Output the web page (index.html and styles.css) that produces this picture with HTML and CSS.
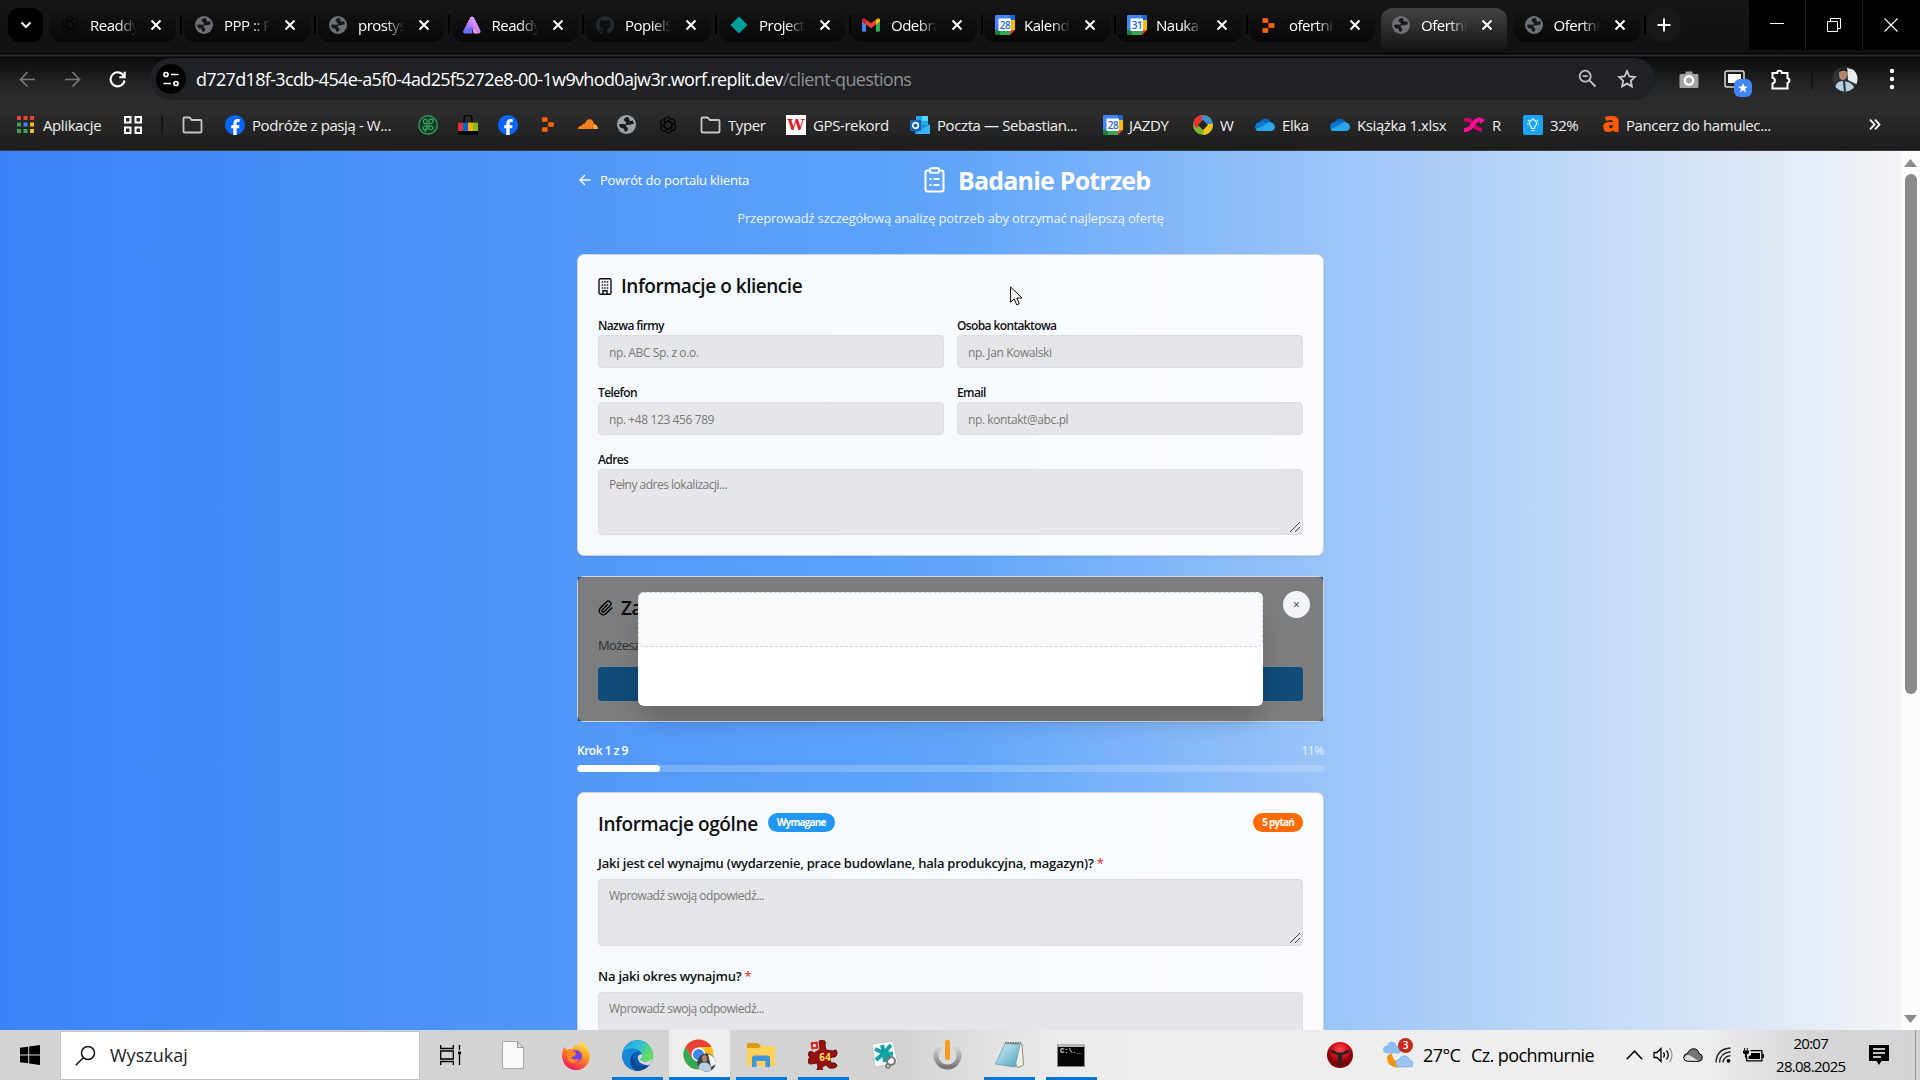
FILE: index.html
```html
<!DOCTYPE html>
<html lang="pl">
<head>
<meta charset="utf-8">
<title>Badanie Potrzeb</title>
<link rel="stylesheet" href="styles.css">
</head>
<body>
<svg class="defs" width="0" height="0" aria-hidden="true">
  <defs>
    <linearGradient id="g-a" x1="0" y1="1" x2="1" y2="0"><stop offset="0" stop-color="#5b6cff"/><stop offset=".5" stop-color="#c583ff"/><stop offset="1" stop-color="#ffb3e6"/></linearGradient>
    <linearGradient id="g-ff" x1=".8" y1="0" x2=".3" y2="1"><stop offset="0" stop-color="#fff44f"/><stop offset=".45" stop-color="#ff9020"/><stop offset="1" stop-color="#f0125f"/></linearGradient>
    <linearGradient id="g-edge" x1="0" y1="0" x2="1" y2=".4"><stop offset="0" stop-color="#1b9de2"/><stop offset=".6" stop-color="#35c1d6"/><stop offset="1" stop-color="#62e05a"/></linearGradient>
    <linearGradient id="g-pw" x1="0" y1="0" x2="0" y2="1"><stop offset="0" stop-color="#ddd"/><stop offset="1" stop-color="#777"/></linearGradient>
    <linearGradient id="g-note" x1="0" y1="0" x2="1" y2="1"><stop offset="0" stop-color="#d8f1f7"/><stop offset="1" stop-color="#4aa5bd"/></linearGradient>
    <radialGradient id="g-red" cx=".5" cy=".3"><stop offset="0" stop-color="#ff4a4a"/><stop offset=".6" stop-color="#d80f1c"/><stop offset="1" stop-color="#7d0009"/></radialGradient>
  </defs>
  <symbol id="x" viewBox="0 0 12 12"><path d="M1.500 1.500l9 9M10.500 1.500l-9 9" stroke="#fff" stroke-width="2" fill="none"/></symbol>
  <symbol id="globe" viewBox="0 0 20 20"><circle cx="10" cy="10" r="10" fill="currentColor"/><path d="M11.500 2.200C9 2.500 7.300 3.500 7.300 5c0 2 2.500 1.500 2.500 3.500S6 9.500 4 9.500l-1.700.5c0 3 2.200 4 3.700 4 2 0 1.500 3.600 3 3.600 1.600 0 2.500-1.600 2.500-3s-2-1.600-2-2.900c0-1.200 1.500-1.700 3.500-1.500s3.200-.8 4.600-.6c0-1.600-.5-3-1.400-4.200-.7 1.100-2.200 1.300-2.900.5C12.300 5 13.500 3.500 11.500 2.200z" fill="#191919"/></symbol>
  <symbol id="gpt" viewBox="0 0 20 20"><g fill="none" stroke="currentColor" stroke-width="1.500"><path id="petal" d="M10 5.500l4 2.200v5M6.200 7.700V4.600A3.600 3.600 0 0 1 13 3.100"/><use href="#petal" transform="rotate(60 10 10)"/><use href="#petal" transform="rotate(120 10 10)"/><use href="#petal" transform="rotate(180 10 10)"/><use href="#petal" transform="rotate(240 10 10)"/><use href="#petal" transform="rotate(300 10 10)"/></g></symbol>
  <symbol id="github" viewBox="0 0 16 16"><path fill="currentColor" d="M8 0C3.580 0 0 3.580 0 8c0 3.540 2.290 6.530 5.470 7.590.4.070.55-.17.55-.38 0-.19-.01-.82-.01-1.490-2.010.37-2.530-.49-2.690-.94-.09-.23-.48-.94-.82-1.130-.28-.15-.68-.52-.01-.53.63-.01 1.080.58 1.230.82.72 1.210 1.870.87 2.330.66.07-.52.28-.87.51-1.070-1.780-.2-3.640-.89-3.640-3.950 0-.87.31-1.590.82-2.150-.08-.2-.36-1.020.08-2.120 0 0 .67-.21 2.200.82a7.600 7.600 0 0 1 4 0c1.530-1.040 2.200-.82 2.200-.82.44 1.100.16 1.920.08 2.120.51.56.82 1.270.82 2.150 0 3.070-1.870 3.750-3.650 3.950.29.25.54.73.54 1.480 0 1.070-.01 1.930-.01 2.200 0 .21.15.46.55.38A8 8 0 0 0 16 8c0-4.420-3.580-8-8-8z"/></symbol>
  <symbol id="cal" viewBox="0 0 20 20"><path d="M1 0h14v5H5v10H0V1q0-1 1-1z" fill="#4285f4"/><path d="M15 0h4q1 0 1 1v4h-5z" fill="#1967d2"/><path d="M15 5h5v10h-5z" fill="#fbbc04"/><path d="M5 15h10v5H5z" fill="#34a853"/><path d="M0 15h5v5H1q-1 0-1-1z" fill="#188038"/><path d="M15 15h5l-5 5z" fill="#ea4335"/><path d="M3.500 3.500h12.500v12.500H3.500z" fill="#fff"/></symbol>
  <symbol id="replit" viewBox="0 0 16 18"><path d="M1.200 0H6q1.200 0 1.200 1.200V6H1.200Q0 6 0 4.800V1.200Q0 0 1.200 0zM7.200 6h6.300q1.200 0 1.200 1.200v3.600q0 1.200-1.200 1.200H7.200zM0 13.200Q0 12 1.200 12h6v4.800Q7.200 18 6 18H1.200Q0 18 0 16.800z" fill="#ff6207" stroke="#242424" stroke-width=".5"/></symbol>
  <symbol id="fb" viewBox="0 0 20 20"><circle cx="10" cy="10" r="10" fill="#0866ff"/><path d="M8.300 20v-6.700H6.200v-3.100h2.100V8.900c0-3.300 1.500-4.900 4.700-4.900.6 0 1.300.1 1.700.2v2.700h-1.300c-1.400 0-1.800.6-1.800 1.900v1.400h3l-.5 3.100h-2.500V20z" fill="#fff"/></symbol>
  <symbol id="folder" viewBox="0 0 21 18"><path d="M2.500 1.500h5l2.300 2.500h8.700q1 0 1 1v10.500q0 1-1 1h-16q-1 0-1-1v-13q0-1 1-1z" fill="none" stroke="#c4c4c4" stroke-width="1.800"/></symbol>
  <symbol id="cloud" viewBox="0 0 20 13"><path d="M5 3.500a6 6 0 0 1 10.500.7L11 8 3 6z" fill="#0364b8"/><path d="M4.500 4Q1 4.500.2 8T3 13l11-6-5-3.300Q7 3 4.500 4z" fill="#0a78d4"/><path d="M15.500 4.200Q19.500 5 20 9q-.3 3.600-4 4H3.500Q1 13 .7 11L8 8l4-3q2-1.200 3.500-.8z" fill="#28a8ea"/></symbol>
</svg>

<div class="screen">
  <header class="browser">
    <div class="strip">
      <div class="tabsearch"><svg width="12" height="8" viewBox="0 0 12 8"><path d="M1.500 1.500L6 6l4.500-4.500" fill="none" stroke="#fff" stroke-width="2.200"/></svg></div>
      <div class="tabs">
        <div class="tab"><svg class="fav black"><use href="#gpt"/></svg><span>Readdy</span><svg class="cl"><use href="#x"/></svg></div>
        <div class="tab"><svg class="fav grey"><use href="#globe"/></svg><span>PPP :: P</span><svg class="cl"><use href="#x"/></svg></div>
        <div class="tab"><svg class="fav grey"><use href="#globe"/></svg><span>prostys</span><svg class="cl"><use href="#x"/></svg></div>
        <div class="tab"><svg class="fav" viewBox="0 0 20 20"><path d="M8 1.500q2-2 4 0l7.500 15q.5 3-2.500 3L10 12l-7 7.500q-3.500 0-2.500-3z" fill="url(#g-a)"/><path d="M.5 16.500q-.8 3 2.500 3h7.500L10 12z" fill="#6a6bff"/><path d="M10 12l7.500 7.500H12z" fill="#ff9be0"/></svg><span>Readdy</span><svg class="cl"><use href="#x"/></svg></div>
        <div class="tab"><svg class="fav dark"><use href="#github"/></svg><span>PopielS</span><svg class="cl"><use href="#x"/></svg></div>
        <div class="tab"><svg class="fav" viewBox="0 0 20 20"><path d="M10 .5l9.500 9.500-9.500 9.500L.5 10z" fill="#00a19b"/></svg><span>Project</span><svg class="cl"><use href="#x"/></svg></div>
        <div class="tab"><svg class="fav" viewBox="0 0 20 20"><path d="M0 5h4.500v12.500H1.500Q0 17.500 0 16z" fill="#4285f4"/><path d="M15.500 5H20v11q0 1.500-1.500 1.500h-3z" fill="#34a853"/><path d="M0 5q0-3 3-2l7 5 7-5q3-1 3 2v1l-4.500 3.500L10 13.500 4.500 9.500 0 6z" fill="#ea4335"/><path d="M15.500 4.200L17 3q3-1 3 2v1.200l-4.500 3.300z" fill="#fbbc04"/><path d="M0 6.200V5q0-3 3-2l1.500 1.200v5.300z" fill="#c5221f"/></svg><span>Odebra</span><svg class="cl"><use href="#x"/></svg></div>
        <div class="tab"><i class="calicon"><svg><use href="#cal"/></svg><b>28</b></i><span>Kalend</span><svg class="cl"><use href="#x"/></svg></div>
        <div class="tab"><i class="calicon"><svg><use href="#cal"/></svg><b>31</b></i><span>Nauka</span><svg class="cl"><use href="#x"/></svg></div>
        <div class="tab"><svg class="fav"><use href="#replit" width="18" height="15" y="2"/></svg><span>ofertni</span><svg class="cl"><use href="#x"/></svg></div>
        <div class="tab active"><svg class="fav grey"><use href="#globe"/></svg><span>Ofertni</span><svg class="cl"><use href="#x"/></svg></div>
        <div class="tab"><svg class="fav grey"><use href="#globe"/></svg><span>Ofertni</span><svg class="cl"><use href="#x"/></svg></div>
      </div>
      <div class="newtab"><svg width="14" height="14" viewBox="0 0 14 14"><path d="M7 .5v13M.5 7h13" stroke="#fff" stroke-width="2"/></svg></div>
      <div class="winbtns">
        <div><svg width="14" height="14" viewBox="0 0 14 14"><path d="M0 5.500h14" stroke="#fff"/></svg></div>
        <div><svg width="14" height="14" viewBox="0 0 14 14"><path d="M.5 3.500h10v10H.5zM3.500 3.500v-3h10v10h-3" fill="none" stroke="#fff"/></svg></div>
        <div><svg width="14" height="14" viewBox="0 0 14 14"><path d="M.5.5l13 13M13.500.5l-13 13" stroke="#fff" stroke-width="1.100"/></svg></div>
      </div>
    </div>

    <div class="toolbar">
      <div class="nav">
        <svg width="17" height="17" viewBox="0 0 17 17"><path d="M8.500 1L1.500 8.500l7 7M1.500 8.500H16" fill="none" stroke="#777" stroke-width="1.700"/></svg>
        <svg width="17" height="17" viewBox="0 0 17 17"><path d="M8.500 1l7 7.500-7 7M15.500 8.500H1" fill="none" stroke="#777" stroke-width="1.700"/></svg>
        <svg width="17" height="17" viewBox="0 0 17 17"><path d="M15 5.500A7 7 0 1 0 15.500 9.500M15.700.800V6.300H10.300" fill="none" stroke="#fff" stroke-width="2.100"/></svg>
      </div>
      <div class="omni">
        <div class="site"><svg width="16" height="16" viewBox="0 0 16 16"><g fill="none" stroke="#fff" stroke-width="1.700"><circle cx="3" cy="3.500" r="2"/><circle cx="13" cy="12.500" r="2"/><path d="M8 3.500h7.500M.5 12.500H8"/></g></svg></div>
        <div class="url">d727d18f-3cdb-454e-a5f0-4ad25f5272e8-00-1w9vhod0ajw3r.worf.replit.dev<span>/client-questions</span></div>
        <div class="omniicons">
          <svg width="19" height="19" viewBox="0 0 19 19"><g fill="none" stroke="#c0c0c0" stroke-width="1.800"><circle cx="7.200" cy="7.200" r="5.500"/><path d="M11.200 11.200l6.300 6.300M4.700 7.200h5"/></g></svg>
          <svg width="20" height="20" viewBox="0 0 20 20"><path d="M10 2.200l2.400 5.100 5.500.7-4.100 3.800 1.100 5.600L10 14.600l-4.900 2.800 1.100-5.600L2.100 8l5.500-.7z" fill="none" stroke="#c8c8c8" stroke-width="1.800"/></svg>
        </div>
      </div>
      <div class="ext">
        <svg width="20" height="19" viewBox="0 0 20 19"><path d="M2 4h4l1-2.500h6L14 4h4q1.500 0 1.500 1.500v11Q19.500 18 18 18H2Q.5 18 .5 16.500v-11Q.5 4 2 4z" fill="#a2a2a2"/><circle cx="10" cy="10.500" r="4.200" fill="none" stroke="#fff" stroke-width="2.400"/></svg>
        <div class="tabgroup"><svg width="22" height="19" viewBox="0 0 22 19"><rect x="1" y="1" width="19" height="16" rx="2" fill="none" stroke="#ddd" stroke-width="1.500"/><path d="M4 4h13v9H4z" fill="#fff"/></svg><b><svg width="10" height="10" viewBox="0 0 10 10"><path d="M5 0l1.300 3.500H10L7 5.800 8.100 9.500 5 7.300 1.900 9.500 3 5.800 0 3.500h3.700z" fill="#fff"/></svg></b></div>
        <svg width="22" height="21" viewBox="0 0 22 21"><path d="M2.500 4h4.700a2.300 2.300 0 0 1 4.600 0h5.700v5.200a2.400 2.400 0 0 1 0 4.700v5.600h-15v-5a2.900 2.900 0 0 0 0-5.700z" fill="none" stroke="#fff" stroke-width="2"/></svg>
        <i class="vsep"></i>
        <svg width="26" height="26" viewBox="0 0 26 26"><clipPath id="av"><circle cx="13" cy="13" r="12.500"/></clipPath><g clip-path="url(#av)"><path d="M0 0h26v26H0z" fill="#2e3433"/><path d="M15 2l11 3v14l-10-5z" fill="#e8edf0"/><path d="M3 26q-1-10 7-11l6 1q7 2 6 10z" fill="#b9cfe0"/><ellipse cx="11" cy="8.500" rx="4" ry="5.500" fill="#b58470"/><path d="M7 6q1-5 5-4.500t3.500 4Q11 4 7 6z" fill="#201c1a"/><path d="M11 15l1 11h2l-1-11z" fill="#234"/></g></svg>
        <svg width="6" height="22" viewBox="0 0 6 22"><g fill="#fff"><circle cx="3" cy="3" r="2.200"/><circle cx="3" cy="11" r="2.200"/><circle cx="3" cy="19" r="2.200"/></g></svg>
      </div>
    </div>

    <nav class="bookmarks">
      <div><svg width="17" height="17" viewBox="0 0 17 17"><path d="M0 0h4v4H0zM6.500 0h4v4h-4zM13 0h4v4h-4z" fill="#ea4335"/><path d="M0 6.500h4v4H0zM0 13h4v4H0zM6.500 13h4v4h-4z" fill="#34a853"/><path d="M6.500 6.500h4v4h-4z" fill="#4285f4"/><path d="M13 6.500h4v4h-4zM13 13h4v4h-4z" fill="#fbbc04"/></svg>Aplikacje</div>
      <div><svg width="18" height="18" viewBox="0 0 18 18"><path d="M1 1h5.500v5.500H1zM11.500 1H17v5.500h-5.500zM1 11.500h5.500V17H1zM11.500 11.500H17V17h-5.500z" fill="none" stroke="#fff" stroke-width="2"/></svg></div>
      <div><i class="vsep"></i></div>
      <div><svg width="21" height="18"><use href="#folder"/></svg></div>
      <div><svg width="20" height="20"><use href="#fb"/></svg>Podróże z pasją - W...</div>
      <div><svg width="20" height="20" viewBox="0 0 20 20"><circle cx="10" cy="10" r="9.200" fill="#173c26" stroke="#2b9a57" stroke-width="1.400"/><path d="M9 9q-4 0-3.500-3T9 5V9zM11 9V5q3-2 4 .5T11 9zM11 11q4-.5 4 2t-4 1zM9 11v3q-3 2-4-.5T9 11zM10 10l-3 7" fill="none" stroke="#3fae6b" stroke-width="1.100"/></svg></div>
      <div><svg width="20" height="20" viewBox="0 0 20 20"><path d="M6 7V4a4 4 0 0 1 8 0v3" fill="none" stroke="#000" stroke-width="1.500"/><path d="M0 7h20v13H0z" fill="#050505"/><path d="M0 7.500h5V16H0z" fill="#e53238"/><path d="M5 7.500h5V16H5z" fill="#0064d2"/><path d="M10 7.500h5V16h-5z" fill="#f5af02"/><path d="M15 7.500h5V16h-5z" fill="#86b817"/></svg></div>
      <div><svg width="20" height="20"><use href="#fb"/></svg></div>
      <div><svg width="15" height="15"><use href="#replit"/></svg></div>
      <div><svg width="20" height="11" viewBox="0 0 20 11"><path d="M0 10q.5-3.500 4-3.500Q4.500 4 7 4.500 8.500 0 12 .2t4 5.300L14 10z" fill="#f48120"/><path d="M14.500 10l1.300-5q4 .5 4.200 5z" fill="#faad3f"/></svg></div>
      <div class="lite"><svg width="19" height="19"><use href="#globe"/></svg></div>
      <div class="black"><svg width="18" height="18"><use href="#gpt"/></svg></div>
      <div><svg width="21" height="18"><use href="#folder"/></svg>Typer</div>
      <div><i class="gps">W</i>GPS-rekord</div>
      <div><svg width="20" height="18" viewBox="0 0 20 18"><path d="M6 0h12v9H6z" fill="#28a8ea"/><path d="M12 0h6v5h-6z" fill="#50d9ff"/><path d="M5 9h15v8q0 1-1 1H6q-1 0-1-1z" fill="#1490df"/><path d="M20 8L5 18h14q1 0 1-1z" fill="#35b8f1"/><path d="M0 4h11v11H0z" fill="#0f65b8"/><circle cx="5.500" cy="9.500" r="2.800" fill="none" stroke="#fff" stroke-width="1.700"/></svg>Poczta — Sebastian...</div>
      <div><i class="calicon"><svg><use href="#cal"/></svg><b>28</b></i>JAZDY</div>
      <div><svg width="20" height="20" viewBox="0 0 20 20"><circle cx="10" cy="10" r="10" fill="#7db72f"/><path d="M1 6Q4-1 12 .3L10 6 4 13Q0 11 1 6z" fill="#e6352b"/><path d="M10 .2Q18 1 19.700 8L14 12 8 4z" fill="#3c8fd0"/><path d="M20 9q0 9-9 11l-1-5 5-6z" fill="#f6c21c"/><path d="M10 5l5 5-5 5-5-5z" fill="#242424"/></svg>W</div>
      <div><svg width="20" height="13"><use href="#cloud"/></svg>Elka</div>
      <div><svg width="20" height="13"><use href="#cloud"/></svg>Książka 1.xlsx</div>
      <div><svg width="21" height="16" viewBox="0 0 21 16"><path d="M0 3q6-1 9 4t9 6" fill="none" stroke="#c9006f" stroke-width="4"/><path d="M0 13q6 0 9-5.500T17 3" fill="none" stroke="#ff0f93" stroke-width="4"/><path d="M15 0l6 3-5 4z" fill="#ff0f93"/></svg>R</div>
      <div><svg width="20" height="20" viewBox="0 0 20 20"><rect width="20" height="20" rx="2" fill="#1ba4f2"/><g fill="none" stroke="#dff3ff" stroke-width="1.200"><path d="M8.500 13.500q0-2-1.200-3a3.500 3.500 0 1 1 5.400 0q-1.200 1-1.200 3zM8.500 15.500h3M10 3v1.500M5 5l1 1M15 5l-1 1M4 9h1.300M16 9h-1.300"/></g></svg>32%</div>
      <div><i class="alg">a</i>Pancerz do hamulec...</div>
      <div><svg width="12" height="11" viewBox="0 0 12 11"><path d="M1 .7l4.500 4.800L1 10.300M6 .7l4.500 4.800L6 10.300" fill="none" stroke="#fff" stroke-width="1.800"/></svg></div>
    </nav>
  </header>

  <div class="viewport">
    <div class="page">
      <main>
        <div class="top">
          <a class="back"><svg width="12" height="12" viewBox="0 0 12 12"><path d="M6 1L1 6l5 5M1 6h10.500" fill="none" stroke="#fff" stroke-width="1.300"/></svg>Powrót do portalu klienta</a>
          <h1><svg width="21" height="26" viewBox="0 0 21 26"><g fill="none" stroke="#fff" stroke-width="2"><rect x="1.500" y="3.500" width="18" height="21" rx="2"/><rect x="6" y="1.200" width="9" height="4.600" rx="1.200" fill="#5aa0fa"/><path d="M5.500 12h2M9.500 12h6M5.500 18h2M9.500 18h6"/></g></svg>Badanie Potrzeb</h1>
        </div>
        <p class="sub">Przeprowadź szczegółową analizę potrzeb aby otrzymać najlepszą ofertę</p>

        <section class="card">
          <h2><svg width="14" height="17" viewBox="0 0 14 17"><g fill="none" stroke="#111" stroke-width="1.400"><rect x="1" y=".8" width="12" height="15.400" rx="1.500"/><path d="M5 16v-3.200h4V16"/><path d="M3.700 4h1.500M6.200 4h1.500M8.800 4h1.500M3.700 7h1.500M6.200 7h1.500M8.800 7h1.500M3.700 10h1.500M6.200 10h1.500M8.800 10h1.500"/></g></svg>Informacje o kliencie</h2>
          <div class="fields">
            <label>Nazwa firmy<input placeholder="np. ABC Sp. z o.o."></label>
            <label>Osoba kontaktowa<input placeholder="np. Jan Kowalski"></label>
            <label>Telefon<input placeholder="np. +48 123 456 789"></label>
            <label>Email<input placeholder="np. kontakt@abc.pl"></label>
            <label class="wide">Adres<textarea placeholder="Pełny adres lokalizacji..."></textarea></label>
          </div>
        </section>

        <section class="card attach">
          <h2><svg width="16" height="16" viewBox="0 0 24 24"><path d="M21.400 11.100l-9.200 9.200a6 6 0 0 1-8.500-8.500L12.600 2.900a4 4 0 0 1 5.700 5.700l-8.800 8.800a2 2 0 0 1-2.900-2.800l8.200-8.100" fill="none" stroke="#111" stroke-width="2.200"/></svg>Załączniki</h2>
          <p>Możesz</p>
          <div class="btn"></div>
          <div class="overlay">
            <div class="modal"><div class="drop"></div></div>
            <div class="close">×</div>
          </div>
        </section>

        <div class="prog">
          <div class="progtext"><b>Krok 1 z 9</b><span>11%</span></div>
          <div class="bar"><div style="width:11.1%"></div></div>
        </div>

        <section class="card quiz">
          <h2>Informacje ogólne<em>Wymagane</em><em class="or">5 pytań</em></h2>
          <label>Jaki jest cel wynajmu (wydarzenie, prace budowlane, hala produkcyjna, magazyn)? <i>*</i></label>
          <textarea placeholder="Wprowadź swoją odpowiedź..."></textarea>
          <label class="second">Na jaki okres wynajmu? <i>*</i></label>
          <textarea placeholder="Wprowadź swoją odpowiedź..."></textarea>
        </section>
      </main>
    </div>
    <div class="scroll">
      <svg width="13" height="8" viewBox="0 0 13 8"><path d="M6.500 0L13 8H0z" fill="#8b8b8b"/></svg>
      <div class="thumb"></div>
      <svg width="13" height="8" viewBox="0 0 13 8"><path d="M6.500 8L13 0H0z" fill="#8b8b8b"/></svg>
    </div>
    <svg class="cursor" width="13" height="20" viewBox="0 0 13 20"><path d="M.6 1v15.300l3.600-3.400 2.500 5.900 2.600-1.100-2.500-5.700H12z" fill="#fff" stroke="#000"/></svg>
  </div>

  <footer class="taskbar">
    <div class="start"><svg width="20" height="20" viewBox="0 0 20 20"><path d="M0 2.800L8.200 1.700V9.500H0zM9.200 1.500L20 0v9.500H9.200zM0 10.500h8.200v7.800L0 17.200zM9.200 10.500H20V20L9.200 18.500z"/></svg></div>
    <div class="search"><svg width="21" height="21" viewBox="0 0 21 21"><g fill="none" stroke="#111" stroke-width="1.500"><circle cx="13" cy="8" r="6.500"/><path d="M8.300 12.700L.8 20.200"/></g></svg>Wyszukaj</div>
    <div class="tiles">
      <div><svg width="21" height="20" viewBox="0 0 21 20"><g fill="none" stroke="#000" stroke-width="1.300"><path d="M.7 0v3.500h12.600V0M.7 20v-3.500h12.600V20M.7 6h12.600v8H.7zM19.500 0v5M19.500 10v10"/><path d="M18 6.500h3v3h-3z" fill="#000" stroke="none"/></g></svg></div>
      <div><svg width="22" height="28" viewBox="0 0 22 28"><path d="M.5.500h15l6 6v21H.5z" fill="#fafafa" stroke="#aaa"/><path d="M15.500.500v6h6z" fill="#ddd" stroke="#999"/></svg></div>
      <div><svg width="29" height="29" viewBox="0 0 29 29"><path d="M3 6l3 3q3-2 6-1 1-4 4-5 0 3 2 3 0-3 2-6 7 5 8.500 13A13.500 13.500 0 0 1 1.500 18Q0 12 3 6z" fill="url(#g-ff)"/><circle cx="15" cy="15" r="6" fill="#7a3fe0"/><path d="M6 12q3-3 9-1l-1 4-4 1q2 4 8 2-4 6-9 3-4-3-3-9z" fill="#ff8a1c"/></svg></div>
      <div class="run"><svg width="31" height="31" viewBox="0 0 31 31"><clipPath id="ec"><circle cx="15.500" cy="15.500" r="15.300"/></clipPath><g clip-path="url(#ec)"><path d="M0 0h31v31H0z" fill="#0f5fb4"/><path d="M0 15V0h31v21h-8q-5 0-5-2 2-2 1.500-5-1.500-5-8-5T0 15z" fill="url(#g-edge)"/><path d="M0 15Q2 8 10 8.500q6 0 8 3-7-1-8 6-.5 8 8 13.500H0z" fill="#1686d9"/><path d="M13 12.500q-4 4 0 10 6 6 15 2-4 6-12.500 7Q9 29 8 22q0-7 5-9.500z" fill="#0b4a92"/><path d="M19.500 14q2 3-1.500 5 1 2 5 2.500 4 0 8-3v6q-4 1-7 .5-7-1-8-6-1-4 3.500-5z" fill="#d6d6d6"/></g></svg></div>
      <div class="run cur"><svg width="33" height="33" viewBox="0 0 33 33"><circle cx="15.500" cy="15.500" r="15" fill="#fbc116"/><path d="M2.500 8A15 15 0 0 1 28.500 8H15.500L9 19z" fill="#ea4335"/><path d="M2.500 8A15 15 0 0 0 15.500 30.500L22 19h-13z" fill="#34a853"/><circle cx="15.500" cy="15.500" r="7" fill="#fff"/><circle cx="15.500" cy="15.500" r="5.500" fill="#4285f4"/><circle cx="23.500" cy="23.500" r="9.300" fill="#3d4244"/><path d="M25 15q8 2 8 10l-5 3z" fill="#eef2f4"/><ellipse cx="21.500" cy="19.500" rx="2.500" ry="3.500" fill="#b18370"/><path d="M15.500 29q0-6 7-5.500 6 1 5.500 8-7 3-12.500-2.500z" fill="#b8cede"/></svg></div>
      <div class="run"><svg width="28" height="24" viewBox="0 0 28 24"><path d="M0 1q0-1 1-1h10l3 3v4H0z" fill="#d99b0b"/><path d="M0 5h12l2-2h13q1 0 1 1v19H0z" fill="#ffd257"/><path d="M5 24v-9q0-2.500 2.500-2.500h13q2.500 0 2.500 2.500v9h-4.500v-6h-9v6z" fill="#3b93d9"/></svg></div>
      <div class="run"><i class="puz"><svg width="30" height="30" viewBox="0 0 30 30"><path d="M1 12q3-2 5 1l5-3V4q-2-3 2-4 6 0 4 5l1 5 7 1q4-3 4 2t-5 4l-2 2 1 4q5-1 6 2 0 4-8 3l-3-3-4 2q2 5-2 5-5 0-2-5l-1-4-6 1q-4 0-3-4l2-3q-3-1-1-5z" fill="#98100e" stroke="#4d0504" stroke-width=".8"/><path d="M2 2l8-1 1 8-8 1z" fill="#c92a22" stroke="#eee" stroke-width=".7"/><circle cx="6.500" cy="5.500" r="1.700" fill="#ddd"/></svg><b>64</b></i></div>
      <div><svg width="28" height="28" viewBox="0 0 28 28"><path d="M1 3l21-3 5 22-23 4z" fill="#fafafa" stroke="#c5c5c5"/><path d="M13 12L11 4M13 12l7-8M13 12L4 8M13 12l9 1M13 12l-8 7M13 12l1 9M13 12l6 6" stroke="#12a5a5" stroke-width="4"/><circle cx="20" cy="20" r="4" fill="none" stroke="#777" stroke-width="2"/><circle cx="17" cy="25" r="2" fill="none" stroke="#777" stroke-width="1.500"/></svg></div>
      <div><svg width="29" height="30" viewBox="0 0 29 30"><path d="M9 5.500a11.500 11.500 0 1 0 11 0" fill="none" stroke="url(#g-pw)" stroke-width="5"/><rect x="12" y="0" width="5" height="20" rx="2" fill="#f79a1c"/></svg></div>
      <div class="run"><svg width="29" height="26" viewBox="0 0 29 26"><path d="M12 1l15 1 1.500 21-6 3z" fill="#f3f0e6" stroke="#8c8c80"/><path d="M10 1.500l15 1-5 22.500-19.500-3z" fill="url(#g-note)" stroke="#5d96a5" stroke-width=".7"/><path d="M10 .8h16" stroke="#666" stroke-width="1.600" stroke-dasharray="1.500 1"/></svg></div>
      <div class="run"><i class="cmd"><b>C:\._</b></i></div>
    </div>
    <div class="tray">
      <div><svg width="26" height="26" viewBox="0 0 26 26"><circle cx="13" cy="13" r="13" fill="url(#g-red)"/><path d="M3 8q5 0 7 2.500h6Q18 8 23 8q-2 4-7.500 5L14 24h-2l-1.500-11Q5 12 3 8z" fill="#222"/></svg></div>
      <div class="weather"><svg width="30" height="30" viewBox="0 0 30 30"><path d="M9 13q0 7 6 9 5 1 7-1-2 7-9 6.500Q4 26 4 18q0-3 5-5z" fill="#f6930d"/><path d="M4 13.500q-4-.5-4-4t4-4Q6 .5 10.500 2q3 1 3.500 4 4 0 4 4t-3 3.500z" fill="#8fbcf0"/><path d="M16 27q-3.500-.5-3.500-4t4-4q2-4 6-3t4 4q3.500.5 3.500 4t-3 3z" fill="#9cc4f5" stroke="#6f9fe0" stroke-width=".6"/></svg><b>3</b></div>
      <div class="deg">27°C</div>
      <div class="desc">Cz. pochmurnie</div>
      <div><svg width="17" height="10" viewBox="0 0 17 10"><path d="M.8 9.200l7.700-8 7.700 8" fill="none" stroke="#000" stroke-width="1.500"/></svg></div>
      <div><svg width="21" height="16" viewBox="0 0 21 16"><g fill="none" stroke="#000" stroke-width="1.300"><path d="M1 5.500h3L8 1.500v13l-4-4H1z"/><path d="M10.500 5.500q2 2.500 0 5M13.500 3.500q3.500 4.500 0 9"/><path d="M16.500 1q5 7 0 14" stroke="#999"/></g></svg></div>
      <div><svg width="20" height="14" viewBox="0 0 20 14"><path d="M4.500 13.300Q.7 13 .7 9.500T4.500 5.500Q6 1 10.500.8t5.500 4.700q3.300.7 3.300 4T16 13.300z" fill="#777" stroke="#000"/><path d="M5 12.800q-4-.5-3.500-3.500 2-3 5-2l9 5.500z" fill="#ddd"/></svg></div>
      <div><svg width="16" height="16" viewBox="0 0 16 16"><g fill="none" stroke="#222" stroke-width="1.400"><path d="M1 15.500Q1.500 2 15.500 1M4.500 15.500Q5 6 15.500 4.800M8 15.500Q8.500 9.500 15.500 8.600"/></g><circle cx="13.500" cy="13.800" r="1.900"/></svg></div>
      <div><svg width="21" height="14" viewBox="0 0 21 14"><path d="M8 5h9v6H5.500V8.500L8 7z"/><path d="M3.600 8.500V12.900h15.300V2.600H7.500M20.300 6v4" fill="none" stroke="#000" stroke-width="1.300"/><path d="M1.700 0v2.500M4.300 0v2.500" stroke="#000"/><path d="M0 2.500h6V5L4 6.500v3.200H2V6.500L0 5z"/></svg></div>
      <div class="clock"><span>20:07</span><span>28.08.2025</span></div>
      <div><svg width="20" height="20" viewBox="0 0 20 20"><path d="M0 0h20v16h-7.500L10 20l-2.500-4H0z"/><path d="M4 4h12M4 8h12M4 12h8" stroke="#fff" stroke-width="1.400"/></svg></div>
    </div>
    <div class="peek"></div>
  </footer>
</div>
</body>
</html>
```
FILE: styles.css
```css
* { box-sizing: border-box; }
body { margin: 0; font-family: "Open Sans", "Noto Sans", sans-serif; overflow: hidden; }
svg { display: block; flex: none; }
.defs { position: absolute; }
i, em { font-style: normal; }
.screen { width: 1920px; height: 1080px; display: flex; flex-direction: column; overflow: hidden; }

/* browser window */
.browser { height: 151px; flex: none; color: #fff; border-bottom: 1px solid #3d3a3a; background: linear-gradient(#161616 0, #111 53px, #000 54px, #2a2a2a 55px, #2a2a2a 56px, #060606 57px, #0e0e0e 60px, #2a2a2a 92px, #2c2c2c 112px, #1c1c1c 150px); }
.strip { height: 58px; display: flex; align-items: flex-start; padding-left: 8px; }
.tabsearch { width: 35px; height: 34px; margin: 8px 7px 0 0; border-radius: 11px; background: #000; display: grid; place-items: center; flex: none; }
.tabs { display: grid; grid-template-columns: 134px 134px 133.500px 133.500px 134px 132px 133px 132px 133px 132px 132.500px 132px; flex: none; }
.tab { position: relative; height: 34px; width: 126px; margin-top: 8px; border-radius: 11px; background: linear-gradient(#151515, #070707); display: flex; align-items: center; padding-left: 11px; font-size: 15px; letter-spacing: -.5px; }
.tab::after { content: ""; position: absolute; right: -6px; top: 7px; width: 2px; height: 19px; background: #000; }
.tab.active { height: 43px; background: linear-gradient(#434343, #131313); padding-bottom: 9px; border-radius: 12px 12px 0 0; }
.tab.active::after, .tab:has(+ .active)::after { display: none; }
.tab span { width: 46px; margin: 0 15px 0 11px; overflow: hidden; white-space: nowrap; -webkit-mask-image: linear-gradient(90deg, #000 60%, transparent); mask-image: linear-gradient(90deg, #000 60%, transparent); }
.fav { width: 18px; height: 18px; }
.grey { color: #6d7076; }
.black { color: #050505; }
.dark { color: #24292e; }
.lite { color: #9ba0a5; }
.cl { width: 12px; height: 12px; margin-left: -1px; }
.calicon { display: grid; place-items: center; width: 20px; height: 20px; margin-right: -2px; flex: none; }
.calicon svg, .calicon b { grid-area: 1 / 1; }
.calicon svg { width: 20px; height: 20px; }
.calicon b { font: 600 10px "Open Sans", sans-serif; letter-spacing: -.5px; color: #1a66d2; }
.newtab { width: 34px; height: 34px; border-radius: 50%; margin: 8px 0 0 1px; background: #191919; display: grid; place-items: center; flex: none; }
.winbtns { margin-left: auto; width: 171px; height: 50px; display: grid; grid-template-columns: 57px 57px 57px; background: #000; }
.winbtns div { display: grid; place-items: center; border-right: 1px solid #1c1c1c; }
.winbtns div:last-child { border: 0; padding-right: 1px; }

.toolbar { height: 42px; display: flex; align-items: center; }
.nav { width: 150px; display: flex; gap: 28px; padding-left: 19px; }
.omni { width: 1506px; height: 42px; border-radius: 21px; background: #202124; display: flex; align-items: center; padding-left: 6px; }
.site { width: 30px; height: 30px; border-radius: 50%; background: #000; display: grid; place-items: center; }
.url { margin-left: 10px; font-size: 18px; letter-spacing: -.66px; line-height: 30px; }
.url span { color: #8f8f8f; }
.omniicons { margin-left: auto; display: flex; gap: 20px; padding-right: 18px; }
.ext { flex: 1; display: grid; grid-template-columns: 45px 46px 41px 21px 48px 40px; align-items: center; padding-left: 24px; }
.ext > svg:last-child { margin-left: 9px; }
.tabgroup { position: relative; }
.tabgroup b { position: absolute; left: 10px; top: 9px; width: 18px; height: 18px; border-radius: 6px; background: #4285f4; display: grid; place-items: center; }
.vsep { display: block; width: 2px; height: 20px; background: #151515; }
.bookmarks { height: 49px; display: grid; padding-left: 17px; align-items: center; font-size: 15px; letter-spacing: -.4px; color: #eee; white-space: nowrap;
  grid-template-columns: 107px 37px 21px 43px 193px 40px 40px 43px 37px 39px 42px 41px 86px 124px 193px 90px 62px 75px 134px 59px 79px 267px 30px; }
.bookmarks div { display: flex; align-items: center; gap: 7px; }
.bookmarks div:first-child { gap: 9px; }
.bookmarks .calicon { margin: 0 -1px 0 0; }
.gps { width: 20px; height: 20px; background: #fff; color: #e3161d; font: 700 15px/20px "DejaVu Serif", serif; display: grid; place-items: center; letter-spacing: 0; }
.alg { width: 17px; font: 800 29px/20px "Open Sans", sans-serif; color: #ff5a00; margin-top: -7px; }

/* page */
.viewport { height: 879px; flex: none; display: flex; position: relative; }
.page { width: 1901px; height: 879px; overflow: hidden; background: linear-gradient(90deg, #3b82f6, #60a5fa 50%, #f3f4f6); }
main { width: 747px; margin: 0 auto; }
.top { height: 57px; display: flex; align-items: center; color: #fff; }
.back { width: 347px; padding-left: 2px; display: flex; align-items: center; gap: 9px; font-size: 13px; letter-spacing: -.2px; }
h1 { margin: 0; display: flex; align-items: center; gap: 13px; font-size: 25px; font-weight: 700; letter-spacing: -.8px; line-height: 36px; white-space: nowrap; }
.sub { margin: 0 0 26px; height: 20px; font-size: 13px; line-height: 20px; letter-spacing: -.17px; text-align: center; color: rgba(255,255,255,.9); }
.card { border: 1px solid #d0d5dc; border-radius: 7px; background: rgba(255,255,255,.95); padding: 17px 20px 20px; box-shadow: 0 1px 2px rgba(0,0,0,.08); color: #111; }
h2 { margin: 0; height: 28px; display: flex; align-items: center; gap: 9px; font-size: 19px; line-height: 28px; font-weight: 570; letter-spacing: -.47px; }
.fields { margin-top: 18px; display: grid; grid-template-columns: 1fr 1fr; gap: 17px 13px; }
.fields label { display: block; font-size: 12px; line-height: 15px; font-weight: 600; letter-spacing: -.62px; }
.wide { grid-column: 1 / 3; }
input, textarea { display: block; width: 100%; border: 1px solid #dcdee2; border-radius: 4px; background: #e5e6ea; padding: 1px 10px 0; font: 400 12px/16px "Open Sans", sans-serif; letter-spacing: -.4px; outline: none; }
::placeholder { color: #7d7873; opacity: 1; }
textarea::-webkit-resizer { background: linear-gradient(135deg, transparent 56%, #444 57%, #444 61%, transparent 62%, transparent 76%, #444 77%, #444 81%, transparent 82%) 1px 1px / 12px 12px no-repeat; }
input { height: 33px; margin-top: 2px; }
textarea { height: 66px; margin-top: 2px; padding-top: 7px; letter-spacing: -.49px; }
.attach { position: relative; margin-top: 20px; height: 146px; }
.attach p { margin: 15px 0 14px; height: 16px; font-size: 13px; line-height: 16px; letter-spacing: -.6px; color: #666; }
.attach h2 { gap: 7px; }
.btn { height: 34px; border-radius: 4px; background: #2196f3; }
.overlay { position: absolute; inset: 0; background: rgba(0,0,0,.5); }
.modal { position: absolute; left: 60px; top: 15px; width: 625px; height: 114px; border-radius: 6px; background: #fff; box-shadow: 0 16px 26px -4px rgba(0,0,0,.2); }
.drop { height: 55px; border: 1px dashed #cbd5e1; border-radius: 6px; background: #f8fafc; }
.close { position: absolute; left: 705px; top: 14px; width: 27px; height: 27px; border-radius: 50%; background: #f1f5f9; display: grid; place-items: center; font-size: 12px; line-height: 26px; color: #333; }
.prog { margin: 21px 0 20px; }
.progtext { display: flex; justify-content: space-between; height: 15px; margin-bottom: 7px; font-size: 12px; line-height: 15px; color: #fff; letter-spacing: -.49px; }
.progtext b { font-weight: 600; }
.progtext span { color: rgba(255,255,255,.8); letter-spacing: -.3px; }
.bar { height: 7px; border-radius: 4px; background: rgba(255,255,255,.2); overflow: hidden; }
.bar div { height: 7px; border-radius: 4px; background: #fff; }
.quiz { height: 300px; }
.quiz h2 { gap: 10px; letter-spacing: -.39px; margin-bottom: 15px; }
.quiz em { height: 19px; padding: 0 9px; border-radius: 10px; background: #2196f3; color: #fff; font-size: 10px; line-height: 19px; font-weight: 700; letter-spacing: -.8px; margin-top: -4px; }
.quiz .or { margin-left: auto; background: #ff6b00; }
.quiz label { display: block; height: 20px; font-size: 13px; line-height: 20px; font-weight: 600; letter-spacing: -.23px; }
.quiz label i { color: #ef4444; }
.quiz textarea { margin: 6px 0 20px; height: 67px; padding-top: 8px; }
.scroll { width: 19px; background: #fcfcfc; display: flex; flex-direction: column; align-items: center; padding: 8px 0 7px; }
.thumb { width: 12px; height: 520px; border-radius: 6px; background: #8b8b8b; margin: 7px 0 auto; }
.cursor { position: absolute; left: 1010px; top: 135px; }

/* taskbar */
.taskbar { height: 50px; flex: none; display: flex; align-items: center; background: linear-gradient(90deg, #d4d4d4 0, #d3d3d3 900px, #ececec 1060px, #efefef 1700px, #d6d6d6 1810px, #d4d4d4); color: #000; }
.start { width: 60px; padding-left: 20px; }
.search { width: 360px; height: 49px; border: 1px solid #c4c4c4; background: #fff; display: flex; align-items: center; gap: 14px; padding-left: 14px; font-size: 18px; color: #222; }
.tiles { display: grid; grid-template-columns: 61px 63px repeat(9, 62px); height: 50px; }
.tiles > div { display: grid; place-items: center; margin: 0 5.500px; }
.tiles .run { border-bottom: 3px solid #0078d7; padding-top: 3px; }
.tiles .cur { background: #eee; margin: 0 0 0 1px; }
.puz, .puz svg, .puz b { display: grid; place-items: center; grid-area: 1 / 1; }
.puz b { font: 700 10px "DejaVu Sans Mono", monospace; color: #ffe45c; padding: 5px 0 0 4px; }
.cmd { width: 28px; height: 23px; background: #060606; border: 1px solid #888; border-top: 3px solid #b4b8bc; }
.cmd b { display: block; font: 700 7px/9px "Liberation Mono", monospace; color: #ddd; padding-left: 2px; }
.tray { margin-left: auto; width: 588px; display: grid; align-items: center; grid-template-columns: 56px 40px 48px 155px 27px 30px 32px 28px 34px 92px 20px; font-size: 18px; letter-spacing: -.6px; white-space: nowrap; }
.tray .clock { display: grid; justify-items: center; font-size: 15px; line-height: 23px; letter-spacing: -.7px; width: 68px; margin: 0 0 0 -1px; }
.weather { position: relative; }
.weather b { position: absolute; left: 15px; top: -2px; width: 15px; height: 15px; border-radius: 50%; background: #c42b1c; color: #fff; font: 600 10px/15px "Open Sans", sans-serif; text-align: center; letter-spacing: 0; }
.peek { width: 5px; height: 50px; border-left: 1px solid #999; }
```
